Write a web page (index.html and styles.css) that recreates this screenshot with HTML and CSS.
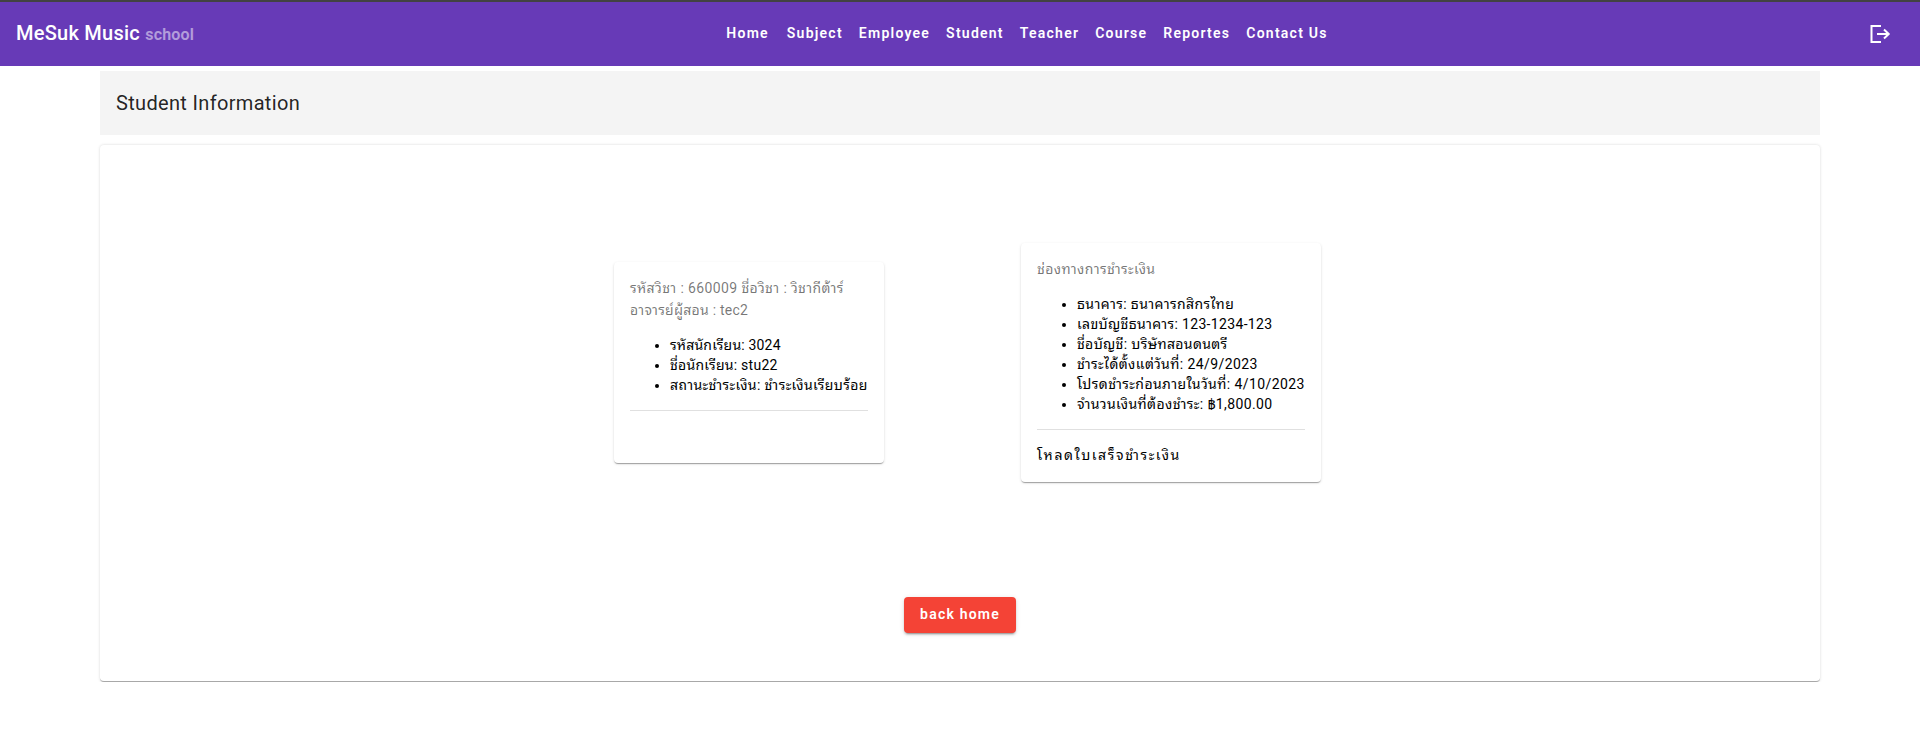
FILE: index.html
```
<!DOCTYPE html>
<html lang="th">
<head>
<meta charset="utf-8">
<title>MeSuk Music school</title>
<link rel="stylesheet" href="styles.css">
</head>
<body>
<header class="topbar">
  <div class="brand">MeSuk Music <span class="brand-sub">school</span></div>
  <nav class="nav">
    <a class="nav-link nav-home">Home</a>
    <a class="nav-link">Subject</a>
    <a class="nav-link">Employee</a>
    <a class="nav-link">Student</a>
    <a class="nav-link">Teacher</a>
    <a class="nav-link">Course</a>
    <a class="nav-link">Reportes</a>
    <a class="nav-link">Contact Us</a>
  </nav>
  <div class="actions">
    <svg class="logout" width="22" height="20" viewBox="0 0 22 20" fill="none" stroke="#fff" stroke-width="2"><path d="M11 2H1.500v16H11M7 10h12M14 5.500l4.700 4.500-4.700 4.500"/></svg>
  </div>
</header>
<main class="container">
  <h1 class="page-title">Student Information</h1>
  <section class="card panel">
    <div class="cards">
      <article class="card course">
        <p class="subtitle"><span class="line l1">รหัสวิชา : 660009 ชื่อวิชา : วิชากีต้าร์</span><span class="line l2">อาจารย์ผู้สอน : tec2</span></p>
        <ul class="list">
          <li><span class="line l3">รหัสนักเรียน: 3024</span></li>
          <li><span class="line l4">ชื่อนักเรียน: stu22</span></li>
          <li><span class="line l5">สถานะชำระเงิน: ชำระเงินเรียบร้อย</span></li>
        </ul>
        <hr class="divider">
      </article>
      <article class="card payment">
        <p class="subtitle"><span class="line p1">ช่องทางการชำระเงิน</span></p>
        <ul class="list">
          <li><span class="line p2">ธนาคาร: ธนาคารกสิกรไทย</span></li>
          <li><span class="line p3">เลขบัญชีธนาคาร: 123-1234-123</span></li>
          <li><span class="line p4">ชื่อบัญชี: บริษัทสอนดนตรี</span></li>
          <li><span class="line p5">ชำระได้ตั้งแต่วันที่: 24/9/2023</span></li>
          <li><span class="line p6">โปรดชำระก่อนภายในวันที่: 4/10/2023</span></li>
          <li><span class="line p7">จำนวนเงินที่ต้องชำระ: ฿1,800.00</span></li>
        </ul>
        <hr class="divider">
        <a class="download"><span class="line p8">โหลดใบเสร็จชำระเงิน</span></a>
      </article>
    </div>
    <button class="back">back home</button>
  </section>
</main>
</body>
</html>
```
FILE: styles.css
```
* { box-sizing: border-box; }
body { margin: 0; background: #fff; font-family: Roboto, "Noto Sans Thai Looped", Loma, Garuda, Waree, "Noto Sans Thai", sans-serif; font-size: 14px; color: #000; }
.topbar { height: 66px; border-top: 2px solid #424242; background: #673ab7; color: #fff; display: grid; grid-template-columns: 1fr auto 1fr; align-items: center; padding: 0 16px; }
.brand { font-size: 20px; font-weight: 550; letter-spacing: .25px; line-height: 32px; }
.brand-sub { font-size: 16px; opacity: .5; font-weight: 600; letter-spacing: .2px; }
.nav { display: flex; padding: 0 0 2px 134px; }
.nav-link { padding: 0 8px; font-size: 14px; font-weight: 600; letter-spacing: 1.24px; line-height: 36px; white-space: nowrap; }
.nav-home { margin-right: 2px; }
.actions { display: flex; justify-content: flex-end; padding-right: 12px; }
.logout { display: block; }
.container { width: 1720px; margin: 5px auto 0; }
.page-title { margin: 0 0 10px; height: 64px; padding: 0 16px; background: #f4f4f4; font-size: 20px; font-weight: 450; letter-spacing: .33px; line-height: 64px; color: rgba(0,0,0,.87); }
.card { background: #fff; border-radius: 4px; box-shadow: 0 2px 1px -1px rgba(0,0,0,.2), 0 1px 1px rgba(0,0,0,.14), 0 1px 3px rgba(0,0,0,.12); }
.panel { height: 537px; padding-top: 98px; display: flex; flex-direction: column; align-items: center; border-bottom: 1px solid #a8a8a8; box-shadow: 0 0 3px rgba(0,0,0,.16); }
.cards { display: flex; justify-content: center; align-items: center; gap: 137px; height: 239px; margin-left: 15px; }
.course { width: 270px; height: 201px; padding: 15px 16px; }
.payment { width: 300px; height: 239px; padding: 15px 16px; }
.subtitle { margin: 0; font-size: 14px; line-height: 22px; color: rgba(0,0,0,.54); }
.line { display: block; white-space: nowrap; letter-spacing: .25px; }
.l1 { letter-spacing: .38px; }
.l3 { letter-spacing: .18px; }
.l5 { letter-spacing: .38px; }
.p1, .p2 { letter-spacing: .4px; }
.p3, .p4 { letter-spacing: .34px; }
.p5, .p6 { letter-spacing: .41px; }
.p7 { letter-spacing: .39px; }
.list { margin: 14px 0 15px; padding-left: 40px; line-height: 20px; }
.divider { margin: 0; border: 0; border-top: 1px solid #e0e0e0; }
.download { display: block; margin-top: 14px; line-height: 22px; }
.p8 { letter-spacing: 1.61px; }
.back { margin-top: 115px; width: 112px; height: 36px; padding: 0 0 2px; border: 0; border-radius: 4px; background: #f44336; color: #fff; font: 600 14px Roboto, sans-serif; letter-spacing: 1.2px; box-shadow: 0 3px 1px -2px rgba(0,0,0,.2), 0 2px 2px rgba(0,0,0,.14), 0 1px 5px rgba(0,0,0,.12); }
```
